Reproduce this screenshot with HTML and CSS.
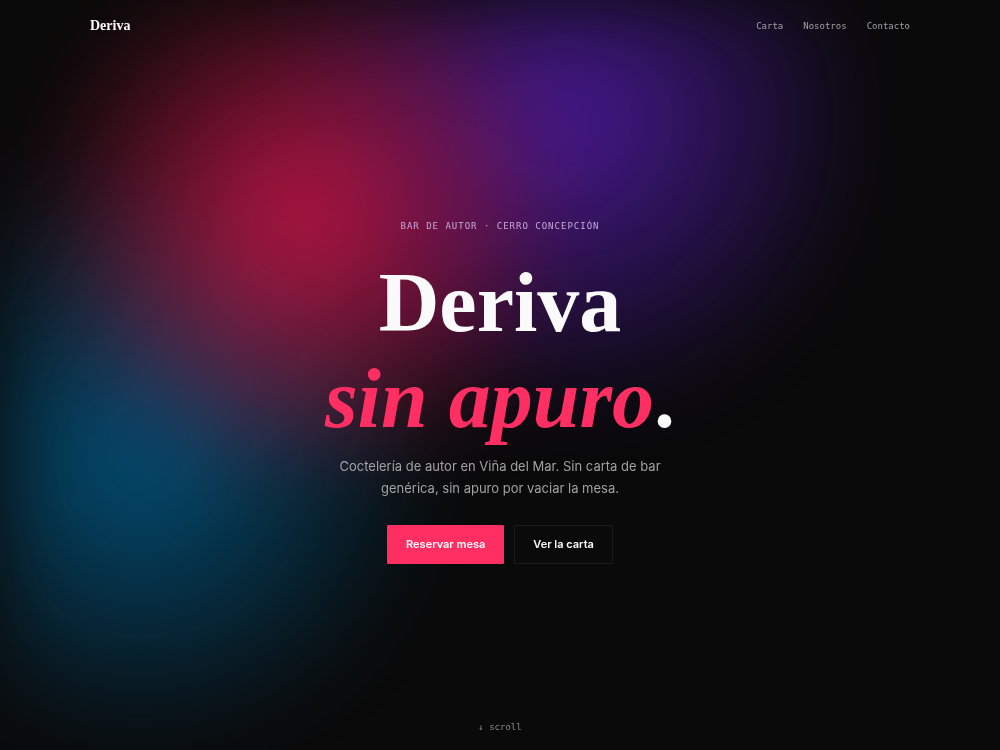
FILE: index.html
```html
<!DOCTYPE html>
<html lang="es">
<head>
    <meta charset="UTF-8">
    <meta name="viewport" content="width=device-width, initial-scale=1.0">
    <title>Deriva</title>
    <link rel="stylesheet" href="styles.css">
</head>
<body>
    <div class="glow" aria-hidden="true"></div>

    <header class="site-header">
        <a class="logo" href="#inicio">Deriva</a>
        <nav class="site-nav">
            <a href="#carta">Carta</a>
            <a href="#nosotros">Nosotros</a>
            <a href="#contacto">Contacto</a>
        </nav>
    </header>

    <main class="hero" id="inicio">
        <p class="eyebrow">Bar de autor · Cerro Concepción</p>
        <h1>Deriva<br><em>sin apuro</em>.</h1>
        <p class="lead">Coctelería de autor en Viña del Mar. Sin carta de bar genérica, sin apuro por vaciar la mesa.</p>
        <div class="actions">
            <button class="btn btn-primary" type="button">Reservar mesa</button>
            <button class="btn btn-outline" type="button">Ver la carta</button>
        </div>
    </main>

    <footer class="scroll-hint">
        <a href="#carta">↓ scroll</a>
    </footer>
</body>
</html>
```

FILE: styles.css
```css
:root {
    --bg: #0a0a0a;
    --text: #fafafa;
    --muted: #a1a1a1;
    --accent: #ff2e63;
    --border: #1c1c1e;
    --serif: "Liberation Serif", serif;
    --sans: Inter, sans-serif;
    --mono: "DejaVu Sans Mono", monospace;
}

* {
    box-sizing: border-box;
    margin: 0;
    padding: 0;
}

body {
    min-height: 100vh;
    display: flex;
    flex-direction: column;
    background: var(--bg);
    color: var(--text);
    font-family: var(--sans);
}

a {
    color: inherit;
    text-decoration: none;
}

/* Background lights */
.glow {
    position: fixed;
    inset: 0;
    z-index: -1;
    opacity: 0.75;
    filter: blur(40px);
    background:
        radial-gradient(circle at 30% 29%, #f51a58 0%, transparent 31%),
        radial-gradient(circle at 57% 16%, #5c1fc0 0%, transparent 36%),
        radial-gradient(circle at 14% 61%, #00669a 0%, transparent 31%);
}

/* Header */
.site-header {
    width: 100%;
    max-width: 860px;
    height: 52px;
    margin: 0 auto;
    padding: 0 20px;
    display: flex;
    align-items: center;
    justify-content: space-between;
}

.logo {
    font-family: var(--serif);
    font-size: 14px;
    font-weight: 700;
}

.site-nav {
    display: flex;
    gap: 20px;
    font-family: var(--mono);
    font-size: 9px;
    color: var(--muted);
}

.site-nav a:hover {
    color: var(--text);
}

/* Hero */
.hero {
    flex: 1;
    display: flex;
    flex-direction: column;
    align-items: center;
    justify-content: center;
    padding: 16px 20px 0;
    text-align: center;
}

.eyebrow {
    margin-bottom: 22px;
    font-family: var(--mono);
    font-size: 9px;
    line-height: 14px;
    letter-spacing: 1px;
    text-transform: uppercase;
    color: #c8a8d8;
}

h1 {
    margin-bottom: 8px;
    font-family: var(--serif);
    font-size: 84px;
    font-weight: 700;
    line-height: 96px;
}

h1 em {
    color: var(--accent);
}

.lead {
    max-width: 350px;
    margin-bottom: 26px;
    font-size: 13px;
    line-height: 22px;
    color: var(--muted);
}

.actions {
    display: flex;
    gap: 10px;
}

.btn {
    height: 39px;
    padding: 0 18px;
    border: 1px solid transparent;
    border-radius: 1px;
    font-family: var(--sans);
    font-size: 11px;
    font-weight: 600;
    color: var(--text);
    cursor: pointer;
}

.btn-primary {
    background: var(--accent);
    border-color: var(--accent);
}

.btn-outline {
    background: transparent;
    border-color: var(--border);
}

/* Scroll hint */
.scroll-hint {
    padding: 6px 0 16px;
    text-align: center;
    font-family: var(--mono);
    font-size: 9px;
    line-height: 14px;
    color: #8a8a8a;
}
```
